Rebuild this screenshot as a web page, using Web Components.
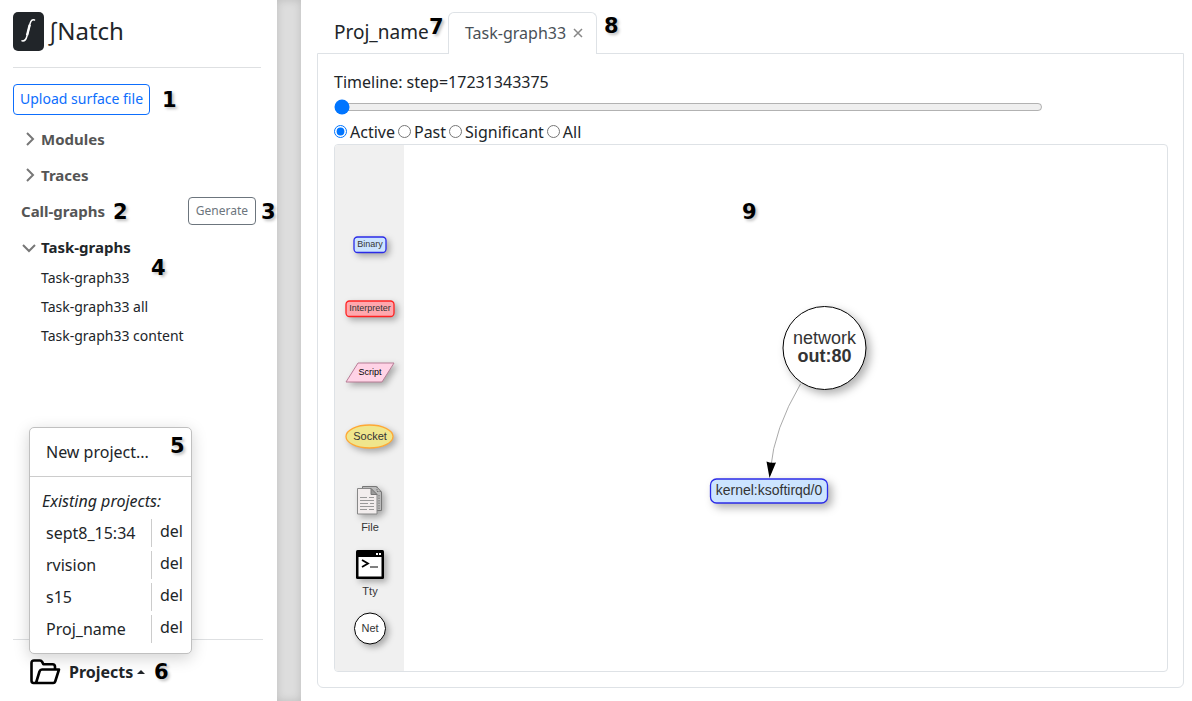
<!DOCTYPE html>
<html lang="en">
<head>
<meta charset="utf-8">
<title>∫Natch</title>
<style>
  html, body { margin: 0; height: 100%; }
  body { font: 16px/24px "Noto Sans", "Open Sans", sans-serif; color: #212529; background: #fff; }
</style>
</head>
<body>
<natch-app></natch-app>

<script>
const define = (name, html) => {
  const tpl = document.createElement('template');
  tpl.innerHTML = html;
  customElements.define(name, class extends HTMLElement {
    constructor() {
      super();
      this.attachShadow({ mode: 'open' }).append(tpl.content.cloneNode(true));
    }
  });
};

/* Numbered marker floating over the interface */
define('call-out', `
<style>
  :host { position: absolute; z-index: 5; font: bold 21px/26px "DejaVu Sans", sans-serif; color: #000;
    text-shadow: 2px 2px 3px rgba(0,0,0,.25); pointer-events: none; }
</style><slot></slot>`);

define('brand-logo', `
<style>
  :host { display: block; }
  a { display: flex; align-items: center; gap: 4px; color: inherit; text-decoration: none; font-size: 24px; line-height: 38px; }
  svg { display: block; }
  span { height: 39px; }
</style>
<a href="#">
  <svg width="31" height="39" viewBox="0 0 31 39" aria-hidden="true">
    <rect width="31" height="39" rx="5" fill="#212529"/>
    <path d="M9 28.800c2.800.6 4-1 4.900-4.600l3.200-12.700c.8-3.100 2-4.200 4.400-3.500" fill="none" stroke="#fff" stroke-width="1.500" stroke-linecap="round"/>
    <path d="M14.100 23.200l2.600-10.400" stroke="#fff" stroke-width="2.400"/>
  </svg>
  <span><slot></slot></span>
</a>`);

define('nav-section', `
<style>
  :host { display: flex; align-items: center; height: 36px; font-size: 15px; font-weight: 700; color: #555; }
  :host([open]) { color: #212529; }
  button { all: unset; display: flex; align-items: center; cursor: pointer; }
  svg { width: 16px; height: 16px; margin-right: 4px; fill: none; stroke: #777; stroke-width: 2; }
  :host([open]) svg { transform: rotate(90deg); }
  :host([plain]) svg { display: none; }
  ::slotted([slot=action]) { margin-left: auto; }
</style>
<button type="button"><svg viewBox="0 0 16 16"><path d="M6 2l6 6-6 6"/></svg><slot></slot></button>
<slot name="action"></slot>`);

define('nav-link', `
<style>
  :host { display: block; font-size: 14px; line-height: 29px; }
  a { color: inherit; text-decoration: none; }
</style>
<a href="#"><slot></slot></a>`);

define('outline-button', `
<style>
  :host { display: block; color: #0d6efd; font-size: 14px; --h: 31px; --p: 0 6px 2px; }
  :host([muted]) { color: #6c757d; font-size: 12px; --h: 28px; --p: 0 7px; }
  button { box-sizing: border-box; height: var(--h); padding: var(--p); border: 1px solid currentColor; border-radius: 4px;
    background: #fff; color: inherit; font: inherit; line-height: 1; font-weight: 400; white-space: nowrap; display: block; }
</style>
<button type="button"><slot></slot></button>`);

define('project-row', `
<style>
  :host { display: grid; grid-template-columns: 1fr 40px; height: 32px; align-items: start; }
  a { color: inherit; text-decoration: none; }
  .name { padding: 2px 0 0 16px; }
  .del { box-sizing: border-box; border-left: 1px solid #ccc; padding-left: 8px; height: 28px; }
</style>
<a class="name" href="#"><slot></slot></a>
<a class="del" href="#">del</a>`);

define('projects-menu', `
<style>
  :host { display: block; position: relative; }
  .menu { position: absolute; left: 16px; bottom: 47px; width: 163px; box-sizing: border-box; z-index: 2; background: #fff;
    border: 1px solid #c0c0c0; border-radius: 5px; box-shadow: 0 4px 16px rgba(0,0,0,.18); padding-bottom: 6px; }
  .new { display: block; padding: 12px 16px; border-bottom: 1px solid #ccc; color: inherit; text-decoration: none; }
  .title { padding: 12px 12px 6px; font-style: italic; white-space: nowrap; }
  .bar { display: flex; align-items: center; height: 62px; border-top: 1px solid #dee0e2; margin-right: 14px; padding: 2px 0 0 16px; box-sizing: border-box;}
  button { all: unset; display: flex; align-items: center; font-weight: 700; height: 32px; cursor: pointer; }
  .folder { width: 32px; height: 28px; margin-right: 8px; fill: none; stroke: #000; stroke-width: 2.600; stroke-linejoin: round; stroke-linecap: round; }
  .caret { border: 4px solid transparent; border-top: 0; border-bottom-color: #212529; margin-left: 4px; }
</style>
<div class="menu">
  <a class="new" href="#">New project...</a>
  <div class="title">Existing projects:</div>
  <slot></slot>
</div>
<div class="bar">
  <button type="button" aria-haspopup="true" aria-expanded="true">
    <svg class="folder" viewBox="0 0 32 28"><path d="M7 25H4.500q-2 0-2-2.500V5q0-2.500 2.500-2.500h6q1.500 0 2 1.200l1.300 2.500h9.200q2.500 0 2.500 2.500v2.500M7 25l3.500-11.500q.7-2 2.500-2H30L26.200 23.500q-.5 1.500-2 1.500z"/></svg>
    Projects<span class="caret"></span>
  </button>
</div>`);

define('side-bar', `
<style>
  :host { display: flex; flex-direction: column; position: relative; box-sizing: border-box; width: 277px; padding: 12px 0 0 13px; background: #fff; }
  .head { border-bottom: 1px solid #dee0e2; padding-bottom: 16px; margin: 0 16px 16px 0; }
  nav { padding: 6px 21px 0 8px; }
  .links { padding: 0 0 0 20px; margin-top: -2px; }
  .upload { align-self: flex-start; }
  projects-menu { margin-top: auto; }
</style>
<div class="head"><brand-logo>∫Natch</brand-logo></div>
<outline-button class="upload">Upload surface file</outline-button>
<nav>
  <nav-section>Modules</nav-section>
  <nav-section>Traces</nav-section>
  <nav-section plain>Call-graphs<outline-button slot="action" muted>Generate</outline-button></nav-section>
  <nav-section open>Task-graphs</nav-section>
  <div class="links">
    <nav-link>Task-graph33</nav-link>
    <nav-link>Task-graph33 all</nav-link>
    <nav-link>Task-graph33 content</nav-link>
  </div>
</nav>
<projects-menu>
  <project-row>sept8_15:34</project-row>
  <project-row>rvision</project-row>
  <project-row>s15</project-row>
  <project-row>Proj_name</project-row>
</projects-menu>
<call-out style="left:162px;top:87px">1</call-out>
<call-out style="left:113px;top:199px">2</call-out>
<call-out style="left:261px;top:199px">3</call-out>
<call-out style="left:151px;top:255px">4</call-out>
<call-out style="left:170px;bottom:242px">5</call-out>
<call-out style="left:154px;bottom:16px">6</call-out>`);

define('project-tabs', `
<style>
  :host { display: flex; align-items: stretch; height: 41px; padding-left: 17px; position: relative; z-index: 1; }
  h1 { margin: 0; width: 114px; font-size: 19px; font-weight: 400; line-height: 41px; }
  .tab { display: flex; align-items: center; gap: 7px; height: 42px; box-sizing: border-box; padding: 0 13px 2px 16px;
    border: 1px solid #dee2e6; border-bottom: 0; border-radius: 6px 6px 0 0; background: #fff; color: #495057; }
  a { color: inherit; text-decoration: none; }
  button { all: unset; display: flex; }
  svg { stroke: #888; stroke-width: 1.500; width: 10px; height: 10px; }
</style>
<h1>Proj_name</h1>
<div class="tab"><a href="#"><slot></slot></a><button type="button" aria-label="Close"><svg viewBox="0 0 10 10"><path d="M1 1l8 8M9 1l-8 8"/></svg></button></div>
<call-out style="left:112px;top:2px">7</call-out>
<call-out style="left:287px;top:1px">8</call-out>`);

define('time-line', `
<style>
  :host { display: block; }
  label { display: block; }
  input[type=range] { display: block; width: 85%; margin: 5px 0 4px; height: 16px; }
  .modes { display: flex; align-items: center; height: 25px; }
  .modes label { display: flex; align-items: center; margin-right: 3px; }
  .modes input { margin: 0 3px 0 0; width: 13px; height: 13px; }
</style>
<label for="step">Timeline: step=17231343375</label>
<input id="step" type="range" min="0" max="100" value="0">
<div class="modes">
  <label><input type="radio" name="mode" checked>Active</label>
  <label><input type="radio" name="mode">Past</label>
  <label><input type="radio" name="mode">Significant</label>
  <label><input type="radio" name="mode">All</label>
</div>`);

define('graph-palette', `
<style>
  :host { display: block; box-sizing: border-box; width: 69px; padding-top: 68px; background: #f0f0f0; }
  svg { display: block; width: 69px; height: 64px; overflow: visible; font-family: "Liberation Sans", sans-serif; text-anchor: middle; fill: #343434; }
  .s { filter: drop-shadow(3px 3px 3px rgba(0,0,0,.3)); }
</style>
<svg viewBox="0 0 69 64"><rect class="s" x="19" y="24" width="32" height="15.500" rx="3.500" fill="#cce4ff" stroke="#2b2be8" stroke-width="1.300"/><text x="35" y="34" font-size="9">Binary</text></svg>
<svg viewBox="0 0 69 64"><rect class="s" x="11" y="24" width="48" height="15.500" rx="3.500" fill="#ffa8ae" stroke="#f22" stroke-width="1.300"/><text x="35" y="34" font-size="9">Interpreter</text></svg>
<svg viewBox="0 0 69 64"><path class="s" d="M23 22h36L47 41H11z" fill="#ffd3e6" stroke="#b77c95"/><text x="35" y="34" font-size="9" fill="#000">Script</text></svg>
<svg viewBox="0 0 69 64"><ellipse class="s" cx="34.500" cy="31.500" rx="23.500" ry="11.500" fill="#f0e68c" stroke="#ffa834" stroke-width="1.300"/><text x="35" y="35" font-size="11">Socket</text></svg>
<svg viewBox="0 0 69 64"><g class="s" stroke="#777"><path d="M27.500 17.500h14l5 5.500v18.500H27.500z" fill="#bbb"/><path d="M42 17.500v5h4.500M44 26v14" fill="none" stroke-dasharray="1.500 1"/><path d="M22.500 19.500h13.500l6 6v19.500H22.500z" fill="#f2eded" stroke="#888"/><path d="M36 19.500v6h6z" fill="#999"/><path d="M25 28.500h7m2 0h5M25 31.500h14M25 34.500h8m2 0h4M25 37.500h14M25 40.500h7m2 0h5" stroke="#999" fill="none"/></g><text x="35" y="62" font-size="11">File</text></svg>
<svg viewBox="0 0 69 64"><g class="s"><rect x="21" y="17" width="28" height="29" rx="1.500" fill="#000"/><path d="M23.500 24h23v19.500h-23z" fill="#fff"/><path d="M41 20h2v2h-2zM44 20h2v2h-2z" fill="#fff"/><path d="M27 27l6 3.500-6 3.500" fill="none" stroke="#000" stroke-width="1.800"/><path d="M35 34h8" stroke="#000"/></g><text x="35" y="62" font-size="11">Tty</text></svg>
<svg viewBox="0 0 69 64"><circle class="s" cx="35" cy="31.500" r="15.500" fill="#fff" stroke="#000"/><text x="35" y="35" font-size="11">Net</text></svg>`);

define('graph-canvas', `
<style>
  :host { display: block; position: relative; flex: 1; overflow: hidden; }
  svg { position: absolute; left: 0; top: 0; overflow: visible; font-family: "Liberation Sans", sans-serif; text-anchor: middle; fill: #343434; }
  .s { filter: drop-shadow(4px 4px 4px rgba(0,0,0,.3)); }
</style>
<svg width="500" height="400" viewBox="0 0 500 400">
  <path d="M396.500 239Q370 284 366.500 324" fill="none" stroke="#aaa"/>
  <path d="M362.500 316.500q4.500 2 9.500 1L365.500 333z" fill="#000"/>
  <circle class="s" cx="420.500" cy="203" r="41.500" fill="#fff" stroke="#000"/>
  <text x="420.500" y="199" font-size="18">network</text>
  <text x="420.500" y="217" font-size="18" font-weight="bold">out:80</text>
  <rect class="s" x="306.500" y="334" width="117" height="24" rx="6" fill="#cce4ff" stroke="#2b2be8" stroke-width="1.300"/>
  <text x="365" y="350" font-size="14">kernel:ksoftirqd/0</text>
</svg>
<call-out style="left:338px;top:54px">9</call-out>`);

define('graph-view', `
<style>
  :host { display: flex; border: 1px solid #dee2e6; border-radius: 4px; overflow: hidden; }
</style>
<graph-palette></graph-palette><graph-canvas></graph-canvas>`);

define('main-panel', `
<style>
  :host { display: flex; flex-direction: column; flex: 1; min-width: 0; box-sizing: border-box; padding: 12px 8px 13px 16px; }
  section { flex: 1; display: flex; flex-direction: column; border: 1px solid #dee2e6; border-radius: 0 0 6px 6px; padding: 16px 15px 15px 16px; }
  graph-view { flex: 1; }
</style>
<project-tabs>Task-graph33</project-tabs>
<section>
  <time-line></time-line>
  <graph-view></graph-view>
</section>`);

define('natch-app', `
<style>
  :host { display: flex; min-height: 100%; }
  .gutter { width: 24px; background: #ddd; box-shadow: inset 0 0 8px rgba(0,0,0,.15); }
</style>
<side-bar></side-bar>
<div class="gutter"></div>
<main-panel></main-panel>`);
</script>
</body>
</html>
